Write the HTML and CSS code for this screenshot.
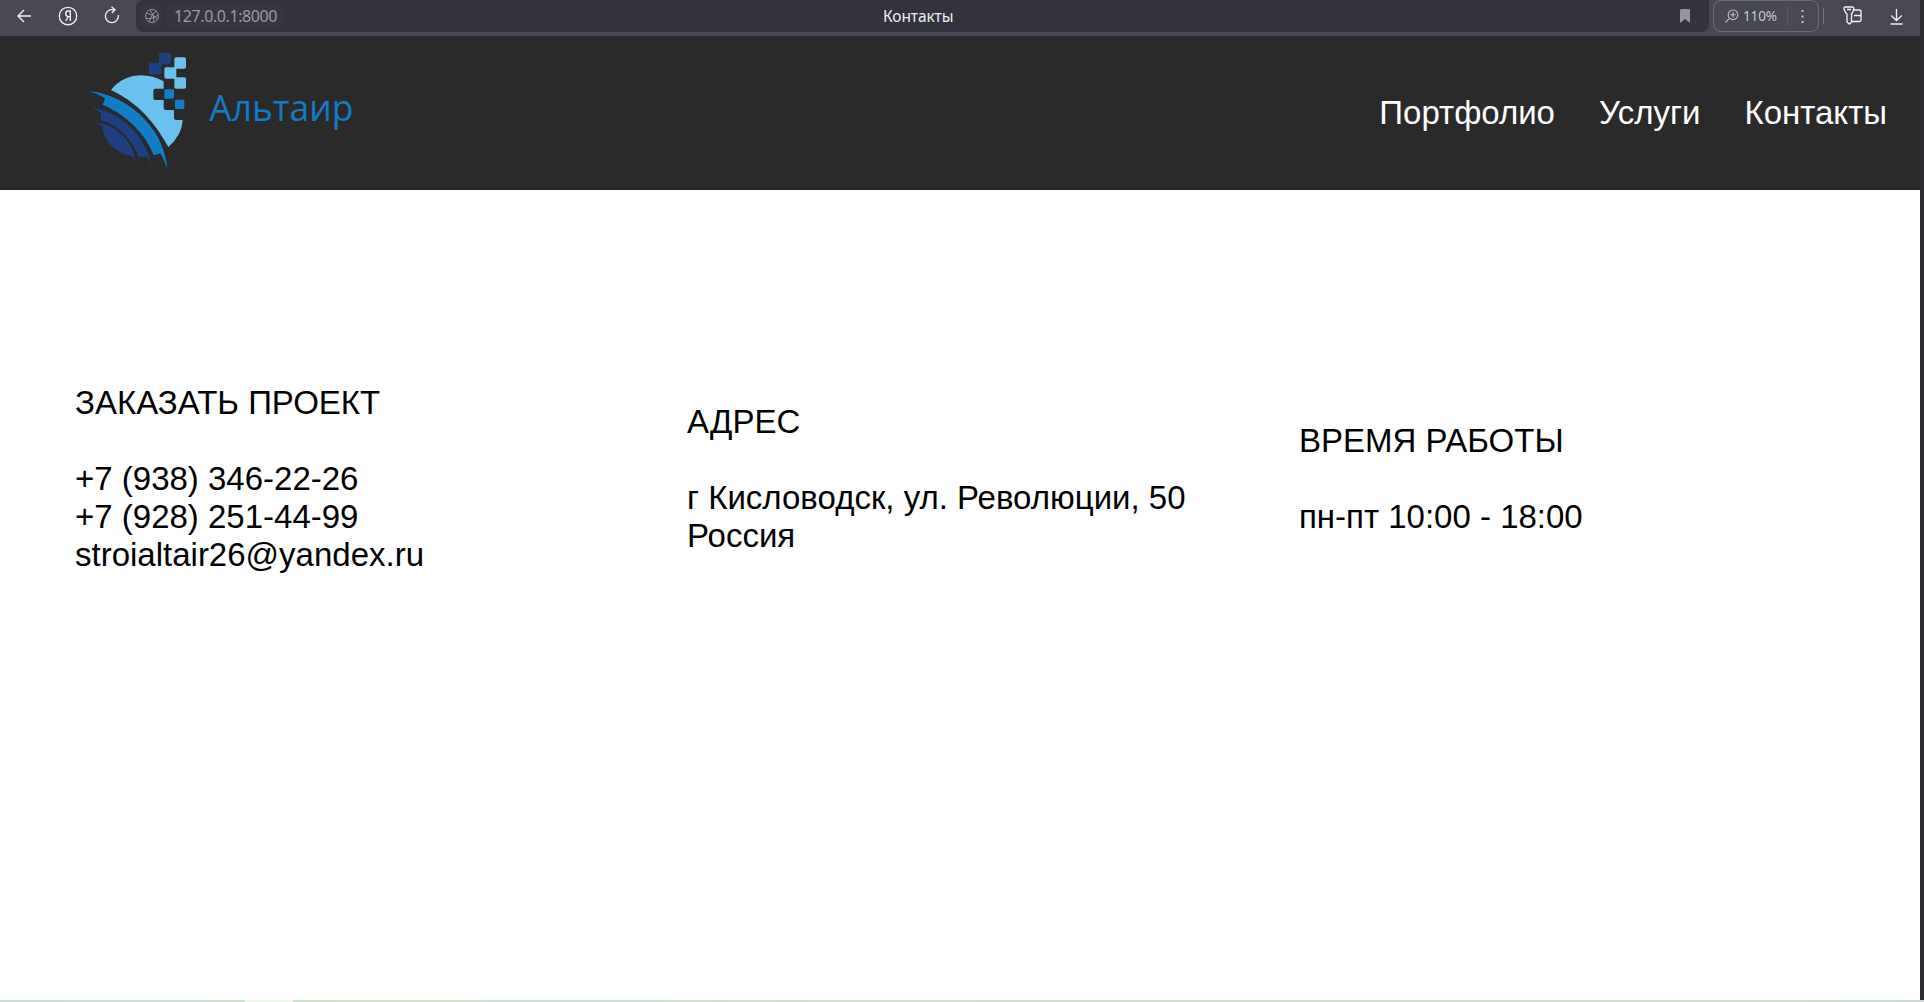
FILE: index.html
```html
<!DOCTYPE html>
<html lang="ru">
<head>
<meta charset="utf-8">
<title>Контакты</title>
<link rel="stylesheet" href="styles.css">
</head>
<body>
<div class="window">
  <div class="toolbar">
    <div class="controls">
      <svg width="14" height="14" viewBox="0 0 14 14"><path d="M14 7H1M7 1 1 7l6 6"/></svg>
      <svg width="20" height="20" viewBox="0 0 20 20"><circle cx="10" cy="10" r="8.7"/><path d="M12.3 15V5H10.5Q7.7 5 7.7 7.8T10.5 10.6H12.3M10.3 10.7 7.6 15"/></svg>
      <svg width="16" height="18" viewBox="0 0 16 18"><path d="M14.3 9A6.5 6.5 0 1 1 9.2 3.8H11M7.5.8 11 3.8 7.8 7"/></svg>
    </div>
    <div class="address">
      <span class="site"><svg width="16" height="16" viewBox="0 0 16 16"><circle cx="8" cy="8" r="6.5"/><path d="M2 5Q8 6 14 11M5 14Q7 7 12 3M6 2Q11 7 10 14M2 10Q7 12 14 7"/></svg></span>
      <span class="host">127.0.0.1:8000</span>
      <span class="page-name">Контакты</span>
      <svg class="bookmark" width="10" height="14" viewBox="0 0 10 14"><path d="M1.5 0h7Q10 0 10 1.5V14L5 10 0 14V1.5Q0 0 1.5 0Z"/></svg>
    </div>
    <div class="zoom">
      <svg width="14" height="14" viewBox="0 0 14 14"><circle cx="8" cy="5.8" r="4.8"/><path d="M4.5 9.3.5 13.3M5.5 5.8h5M8 3.3v5"/></svg>
      <span class="percent">110%</span>
      <i class="line"></i>
      <svg class="dots" width="3" height="13" viewBox="0 0 3 13"><path d="M.5 0h2v2h-2zM.5 5.5h2v2h-2zM.5 11h2v2h-2z"/></svg>
    </div>
    <i class="line outer"></i>
    <svg class="keys" width="19" height="19" viewBox="0 0 19 19"><path d="M2.5 1h6.7Q11 1 10.7 3L10 5.5Q9.6 7 8.5 7.5V16L6.5 18 4 16V8Q2.5 7 1.8 5L1 3Q.7 1 2.5 1ZM4 3.5h4M11 4h5.5Q18 4 18 5.5v8.3Q18 15.5 16.5 15.5H8.5M11 9.5h7"/></svg>
    <svg class="download" width="13" height="17" viewBox="0 0 13 17"><path d="M6.5 1v11.5M1.2 7.5l5.3 5 5.3-5M.5 16h12"/></svg>
  </div>

  <header class="header">
    <svg class="logo" width="300" height="150" viewBox="0 0 900 450" role="img" aria-label="Альтаир">
      <path fill="#6bc1ee" d="M123 150C165 98 230 96 281 124V146H256Q250 146 250 152V174Q250 180 256 180H281V204Q281 210 287 210H312V234Q312 240 318 240H338Q337 284 295 321C254 246 202 187 123 150Z"/>
      <path fill="#127cc4" d="M56 154C160 160 282 255 292 386Q283 360 271 340L251 346C228 284 172 226 98 194L105 175Q82 160 56 154Z"/>
      <path fill="#1e4080" d="M66 203C142 211 234 287 243 379Q238 361 230 349L206 351C186 300 150 258 93 241V219Q80 209 66 203Z"/>
      <path fill="#1e4080" d="M74 247C130 250 192 300 197 370L187 349C141 340 104 308 97 260Q87 251 74 247Z"/>
      <g fill="#1e4080"><rect x="267" y="38" width="36" height="35" rx="5"/><rect x="237" y="68" width="36" height="35" rx="5"/><path d="M266 67h8v8h-8z"/></g>
      <g fill="#6bc1ee"><rect x="313" y="52" width="35" height="34" rx="5"/><rect x="283" y="82" width="36" height="34" rx="5"/><rect x="313" y="112" width="35" height="34" rx="5"/><path d="M312 81h7v6h-7zM312 111h7v6h-7z"/></g>
      <g fill="#127cc4"><rect x="283" y="148" width="29" height="28" rx="4"/><rect x="315" y="179" width="28" height="28" rx="4"/></g>
      <text class="logo-text" x="418" y="242" textLength="432" lengthAdjust="spacingAndGlyphs">Альтаир</text>
    </svg>
    <nav class="nav"><a>Портфолио</a><a>Услуги</a><a>Контакты</a></nav>
  </header>

  <main class="contacts">
    <section><h2>ЗАКАЗАТЬ ПРОЕКТ</h2><p>+7 (938) 346-22-26<br>+7 (928) 251-44-99<br>stroialtair26@yandex.ru</p></section>
    <section><h2>АДРЕС</h2><p>г Кисловодск, ул. Революции, 50<br>Россия</p></section>
    <section><h2>ВРЕМЯ РАБОТЫ</h2><p>пн-пт 10:00 - 18:00</p></section>
  </main>
</div>
<div class="bottom-edge"></div>
</body>
</html>
```
FILE: styles.css
```css
* { box-sizing: border-box; }
body {
  margin: 0;
  height: 1002px;
  overflow: hidden;
  background: #2b2d31;
  font-family: "Liberation Sans", Arial, sans-serif;
}
.window {
  width: 1920px;
  height: 1000px;
  display: flex;
  flex-direction: column;
  background: #fff;
}
.toolbar {
  height: 36px;
  flex: none;
  display: flex;
  align-items: flex-start;
  background: #484852;
  font-family: "Noto Sans", sans-serif;
}
.toolbar svg {
  display: block;
  flex: none;
  fill: none;
  stroke: #f1f1f2;
  stroke-width: 1.35;
}
.controls {
  width: 136px;
  height: 32px;
  padding-left: 17px;
  display: flex;
  align-items: center;
}
.controls svg:nth-child(2) { margin-left: 27px; }
.controls svg:nth-child(3) { margin: -2px 0 0 26px; }
.address {
  width: 1573px;
  height: 32px;
  padding: 0 19px 0 4px;
  display: flex;
  align-items: center;
  border-radius: 0 0 8px 8px;
  border-top-left-radius: 8px;
  background: #33333e;
}
.site {
  width: 24px;
  height: 24px;
  display: grid;
  place-items: center;
  border-radius: 6px;
  background: #363640;
}
.toolbar .site svg { stroke: #92929a; stroke-width: 1; }
.host {
  width: 120px;
  height: 24px;
  margin-left: 2px;
  padding-left: 8px;
  border-radius: 6px;
  background: #363640;
  color: #9b9ba2;
  font-size: 16px;
  letter-spacing: -.4px;
  line-height: 24px;
  white-space: nowrap;
}
.page-name {
  margin-left: 597px;
  color: #ededee;
  font-size: 15.5px;
  letter-spacing: -.1px;
  line-height: 22px;
  margin-bottom: 1px;
}
.toolbar .bookmark { margin-left: auto; fill: #96969d; stroke: none; }
.zoom {
  width: 106px;
  height: 32px;
  margin-left: 4px;
  padding: 0 14px 0 11px;
  display: flex;
  align-items: center;
  border: 1px solid #6b6b75;
  border-radius: 8px;
}
.toolbar .zoom svg { stroke: #c4c4ca; stroke-width: 1.1; }
.toolbar .zoom .dots { margin-left: auto; fill: #c4c4ca; stroke: none; }
.percent {
  width: 34px;
  margin-left: 4px;
  color: #c9c9ce;
  font-size: 13.5px;
  letter-spacing: -.1px;
}
.line { width: 1px; height: 18px; margin-left: 10px; background: #5a5a64; }
.outer { height: 16px; margin: 8px 0 0 4px; background: #777780; }
.keys { margin: 6px 0 0 19px; }
.download { margin: 8px 0 0 28px; }
.header {
  height: 154px;
  flex: none;
  padding: 4px 33px 0 70px;
  display: flex;
  justify-content: space-between;
  background: #2a2a2a;
}
.logo { flex: none; }
.logo-text {
  fill: #127cc4;
  font-family: "Open Sans", sans-serif;
  font-size: 112px;
}
.nav {
  padding-top: 54px;
  display: flex;
  gap: 44px;
  color: #fff;
  font-size: 33px;
  line-height: 38px;
}
.contacts {
  height: 578px;
  padding-left: 75px;
  display: grid;
  grid-template-columns: repeat(3, 612px);
  align-items: center;
  color: #000;
  font-size: 33px;
  line-height: 38px;
}
.contacts h2 { margin: 0 0 38px; font: inherit; }
.contacts p { margin: 0; }
.bottom-edge {
  height: 2px;
  background: linear-gradient(90deg, transparent 245px, #edf7e9 245px 293px, transparent 293px), linear-gradient(90deg, #c9dfda 0, #cbe1d9 200px, #c9e5cd 245px, #cfe7ce 460px, #c8e3db 500px, #cde5cf 900px, #cbe3cf 1780px, #c7dcda 1924px);
}
```
